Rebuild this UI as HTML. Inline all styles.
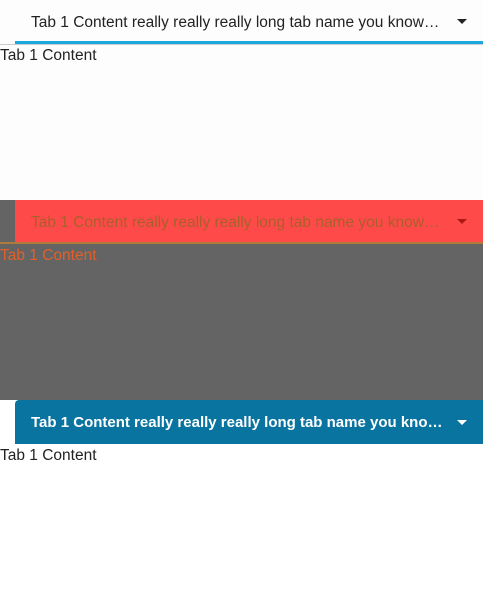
<!DOCTYPE html>
<html><head><style>
body{margin:0;width:483px;height:600px;overflow:hidden;font-family:"Liberation Sans",sans-serif;font-size:15.5px}
.sec{position:relative;height:200px}
.tab{position:absolute;left:15px;right:0;top:0;box-sizing:border-box;white-space:nowrap;overflow:hidden}
.tab span{position:absolute;top:14px;left:16px;width:412px;overflow:hidden;text-overflow:ellipsis;white-space:nowrap;font-size:15.5px}
.arr{position:absolute;right:16px;top:19px;width:0;height:0;border-left:5px solid transparent;border-right:5px solid transparent;border-top:5px solid #222}
.c{position:absolute;left:0;font-size:15.5px}
</style></head><body>
<div class="sec" style="background:#fdfdfd">
 <div class="tab" style="height:44px;border-bottom:3px solid #1ba8df"><span style="color:#222">Tab 1 Content really really really long tab name you know it is</span><div class="arr"></div></div>
 <div style="position:absolute;left:0;right:0;top:44px;height:1px;background:#ccc"></div>
 <div class="c" style="top:47px;color:#222">Tab 1 Content</div>
</div>
<div class="sec" style="background:#646464">
 <div class="tab" style="height:42px;background:#ff4a4a"><span style="color:#a8602a">Tab 1 Content really really really long tab name you know it is</span><div class="arr" style="border-top-color:#b01818"></div></div>
 <div style="position:absolute;left:0;right:0;top:42px;height:2px;background:#b07a3a"></div>
 <div class="c" style="top:47px;color:#e0602a">Tab 1 Content</div>
</div>
<div class="sec" style="background:#fff">
 <div class="tab" style="height:44px;background:#0a74a0;border-top-left-radius:4px"><span style="color:#fff;font-weight:bold;top:14px;font-size:15px">Tab 1 Content really really really long tab name you know it is</span><div class="arr" style="border-top-color:#fff;top:20px"></div></div>
 <div class="c" style="top:47px;color:#222">Tab 1 Content</div>
</div>
</body></html>
